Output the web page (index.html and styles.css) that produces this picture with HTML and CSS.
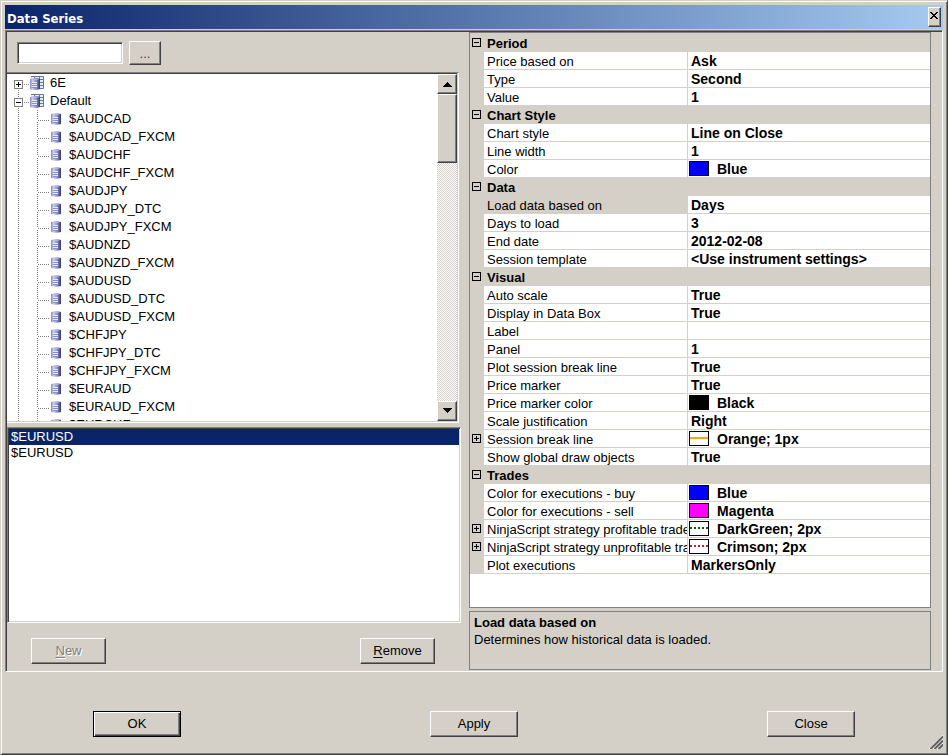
FILE: index.html
```html
<!DOCTYPE html>
<html lang="en">
<head>
  <meta charset="UTF-8">
  <meta name="viewport" content="width=device-width, initial-scale=1.0">
  <title>Data Series</title>
  <link rel="stylesheet" href="styles.css">
</head>
<body>
  <!-- Shared icons -->
  <svg class="defs" width="0" height="0" aria-hidden="true">
    <defs>
      <linearGradient id="metal" x1="0" x2="1" y1="0" y2="0">
        <stop offset="0" stop-color="#8388c4"/>
        <stop offset="0.25" stop-color="#c9cdf0"/>
        <stop offset="0.6" stop-color="#8f93cc"/>
        <stop offset="1" stop-color="#34366e"/>
      </linearGradient>
      <symbol id="db" viewBox="0 0 10 12">
        <path d="M0 1Q5-.5 10 1V11Q5 12.500 0 11Z" fill="url(#metal)"/>
        <path d="M1 1.5Q5 .5 9 1.5Q5 3 1 1.5Z" fill="#b4b9dc"/>
        <path d="M2 4.5H7M2 6.5H7M2 8.5H7" stroke="#e6e9ff" fill="none"/>
        <path d="M2 5.5H7M2 7.5H7M2 9.5H7" stroke="#8a90c8" fill="none"/>
      </symbol>
      <symbol id="dbgroup" viewBox="0 0 14 14">
        <path d="M1 0H14V13H8V3H1Z" fill="#dcf0f5"/>
        <path d="M1 .5H13.5V12.5H9M4.500 0V3M9.500 0V3M9 3.500H13M9 6.500H13M9 9.500H13" stroke="#6f7888" fill="none"/>
        <path d="M0 3Q5 1 10 3V13Q5 15 0 13Z" fill="url(#metal)"/>
        <path d="M1 3.500Q5 2.500 9 3.500Q5 5 1 3.500Z" fill="#b4b9dc"/>
        <path d="M2 6.500H7M2 8.500H7M2 10.500H7" stroke="#e6e9ff" fill="none"/>
        <path d="M2 7.500H7M2 9.500H7M2 11.500H7" stroke="#8a90c8" fill="none"/>
      </symbol>
    </defs>
  </svg>

  <div class="window">
    <header class="titlebar">
      <h1>Data Series</h1>
      <button class="close" type="button" aria-label="Close window">
        <svg width="8" height="7" viewBox="0 0 8 7" shape-rendering="crispEdges"><path d="M0 0h2v1h1v1h2v-1h1v-1h2v1h-1v1h-1v1h-1v1h1v1h1v1h1v1h-2v-1h-1v-1h-2v1h-1v1h-2v-1h1v-1h1v-1h1v-1h-1v-1h-1v-1h-1z"/></svg>
      </button>
    </header>

    <main class="panel">
      <section class="instruments">
        <div class="search">
          <input type="text" aria-label="Instrument">
          <button type="button" class="browse" aria-label="Browse">...</button>
        </div>

        <div class="tree-box">
          <ul class="tree" id="tree">
            <li class="group"><button class="expander" type="button" aria-label="Expand 6E"><svg width="7" height="7"><path d="M1 3.5H6M3.5 1V6"/></svg></button><span class="link"></span><svg class="icon-group"><use href="#dbgroup"/></svg>6E</li>
            <li class="group"><button class="expander" type="button" aria-label="Collapse Default"><svg width="7" height="7"><path d="M1 3.5H6"/></svg></button><span class="link"></span><svg class="icon-group"><use href="#dbgroup"/></svg>Default</li>
            <li>
              <ul class="children" id="symbols"></ul>
            </li>
          </ul>
          <div class="scrollbar">
            <button type="button" class="arrow" aria-label="Scroll up"><svg width="9" height="5" shape-rendering="crispEdges"><path d="M4 0h1v1h1v1h1v1h1v1h1v1h-9v-1h1v-1h1v-1h1v-1h1z"/></svg></button>
            <div class="thumb"></div>
            <button type="button" class="arrow arrow-down" aria-label="Scroll down"><svg width="9" height="5" shape-rendering="crispEdges"><path d="M0 0h9v1h-1v1h-1v1h-1v1h-1v1h-1v-1h-1v-1h-1v-1h-1v-1h-1z"/></svg></button>
          </div>
        </div>

        <ul class="series" role="listbox" aria-label="Data series">
          <li role="option" aria-selected="true" class="selected">$EURUSD</li>
          <li role="option" aria-selected="false">$EURUSD</li>
        </ul>

        <div class="series-actions">
          <button type="button" class="btn" disabled><u>N</u>ew</button>
          <button type="button" class="btn"><u>R</u>emove</button>
        </div>
      </section>

      <section class="properties">
        <div class="grid-box">
          <table class="grid">
            <colgroup>
              <col class="col-gutter">
              <col class="col-name">
              <col>
            </colgroup>
            <tbody id="properties"></tbody>
          </table>
        </div>
        <div class="help">
          <h2>Load data based on</h2>
          <p>Determines how historical data is loaded.</p>
        </div>
      </section>
    </main>

    <footer class="footer">
      <button type="button" class="btn btn-wide default">OK</button>
      <button type="button" class="btn btn-wide">Apply</button>
      <button type="button" class="btn btn-wide">Close</button>
    </footer>
    <svg class="grip" width="14" height="14" aria-hidden="true">
      <path d="M0 14L14 0M4 14L14 4M8 14L14 8" stroke="#fff"/>
      <path d="M1.500 14L14 1.500M5.500 14L14 5.500M9.500 14L14 9.500" stroke="#606060" stroke-width="2"/>
    </svg>
  </div>

  <script>
    const symbols = [
      '$AUDCAD', '$AUDCAD_FXCM', '$AUDCHF', '$AUDCHF_FXCM', '$AUDJPY', '$AUDJPY_DTC',
      '$AUDJPY_FXCM', '$AUDNZD', '$AUDNZD_FXCM', '$AUDUSD', '$AUDUSD_DTC', '$AUDUSD_FXCM',
      '$CHFJPY', '$CHFJPY_DTC', '$CHFJPY_FXCM', '$EURAUD', '$EURAUD_FXCM', '$EURCHF'
    ];

    // name, value, swatch class, expandable
    const sections = {
      'Period': [['Price based on', 'Ask'], ['Type', 'Second'], ['Value', '1']],
      'Chart Style': [['Chart style', 'Line on Close'], ['Line width', '1'], ['Color', 'Blue', 'blue']],
      'Data': [
        ['Load data based on', 'Days'], ['Days to load', '3'], ['End date', '2012-02-08'],
        ['Session template', '&lt;Use instrument settings&gt;']
      ],
      'Visual': [
        ['Auto scale', 'True'], ['Display in Data Box', 'True'], ['Label', ''], ['Panel', '1'],
        ['Plot session break line', 'True'], ['Price marker', 'True'],
        ['Price marker color', 'Black', 'black'], ['Scale justification', 'Right'],
        ['Session break line', 'Orange; 1px', 'line-orange', true],
        ['Show global draw objects', 'True']
      ],
      'Trades': [
        ['Color for executions - buy', 'Blue', 'blue'],
        ['Color for executions - sell', 'Magenta', 'magenta'],
        ['NinjaScript strategy profitable trade', 'DarkGreen; 2px', 'line-green', true],
        ['NinjaScript strategy unprofitable trade', 'Crimson; 2px', 'line-crimson', true],
        ['Plot executions', 'MarkersOnly']
      ]
    };

    function expander(open, label) {
      const path = open ? 'M1 3.5H6' : 'M1 3.5H6M3.5 1V6';
      return `<button class="expander" type="button" aria-label="${open ? 'Collapse' : 'Expand'} ${label}"><svg width="7" height="7"><path d="${path}"/></svg></button>`;
    }

    document.getElementById('symbols').innerHTML = symbols.map(name =>
      `<li><span class="link"></span><svg class="icon-db"><use href="#db"/></svg>${name}</li>`
    ).join('');

    let rows = '';
    for (const title in sections) {
      rows += `<tr class="category"><td class="gutter">${expander(true, title)}</td><th colspan="2">${title}</th></tr>`;
      sections[title].forEach(([name, value, swatch, expandable]) => {
        const active = name === 'Load data based on' ? ' class="active"' : '';
        rows += `<tr${active}>
          <td class="gutter">${expandable ? expander(false, name) : ''}</td>
          <th class="name" scope="row">${name}</th>
          <td class="value">${swatch ? `<span class="swatch ${swatch}"></span>` : ''}${value}</td>
        </tr>`;
      });
    }
    document.getElementById('properties').innerHTML = rows;
  </script>
</body>
</html>
```
FILE: styles.css
```css
* {
  box-sizing: border-box;
}
body {
  margin: 0;
  background-color: #d4d0c8;
  color: #000;
  font-family: "Liberation Sans", Arial, sans-serif;
  font-size: 13px;
  line-height: 18px;
}
ul {
  list-style: none;
  margin: 0;
  padding: 0;
}
button,
input {
  font: inherit;
  color: inherit;
}
button {
  display: flex;
  align-items: center;
  justify-content: center;
  padding: 0;
  background-color: #d4d0c8;
  border: 1px solid;
  border-color: #fff #404040 #404040 #fff;
  box-shadow: inset -1px -1px #808080;
}
.defs {
  position: absolute;
}
.window {
  position: relative;
  display: flex;
  flex-direction: column;
  height: 100vh;
  min-height: 755px;
  padding: 4px;
  border: 1px solid;
  border-color: #d4d0c8 #404040 #404040 #d4d0c8;
  box-shadow: inset 1px 1px #fff, inset -1px -1px #808080;
}

/* Title bar */
.titlebar {
  display: flex;
  align-items: center;
  justify-content: space-between;
  height: 24px;
  margin-bottom: 1px;
  padding: 0 2px;
  background: linear-gradient(90deg, #0a246a, #a6caf0);
}
.titlebar h1 {
  margin: 0;
  padding-top: 3px;
  color: #fff;
  font-family: "DejaVu Sans Condensed", Tahoma, sans-serif;
  font-size: 13px;
  font-weight: bold;
}
.close {
  width: 13px;
  height: 20px;
  padding: 0 1px 3px 0;
}

/* Main panel */
.panel {
  flex: 1;
  min-height: 0;
  display: grid;
  grid-template-columns: minmax(0, 1fr) minmax(0, 1fr);
  grid-template-rows: minmax(0, 1fr);
  padding: 1px 11px 0 1px;
  border: 1px solid;
  border-color: #808080 #fff #fff #808080;
  box-shadow: inset 1px 1px #404040;
}
.instruments,
.properties {
  display: flex;
  flex-direction: column;
}
.search {
  display: flex;
  align-items: center;
  gap: 6px;
  height: 40px;
  padding: 2px 10px 0;
}
.search input {
  width: 106px;
  height: 22px;
  padding: 1px 4px;
  background-color: #fff;
  border: 1px solid;
  border-color: #808080 #fff #fff #808080;
  box-shadow: inset 1px 1px #404040, inset -1px -1px #d4d0c8;
}
.browse {
  width: 32px;
  height: 24px;
  padding-top: 2px;
  color: #404040;
}

/* Instrument tree */
.tree-box {
  flex: 9 1 0;
  min-height: 0;
  display: flex;
  margin-right: 10px;
  padding: 1px 1px 1px 0;
  overflow: hidden;
  background-color: #fff;
  border: solid;
  border-width: 1px 1px 1px 0;
  border-color: #808080 #fff #fff;
  box-shadow: inset -1px -1px #d4d0c8, inset 0 1px #404040;
}
.tree {
  flex: 1;
  overflow: hidden;
  background: repeating-linear-gradient(#808080 0 1px, #fff 1px 2px) 11px 12px / 1px 100% no-repeat;
}
.group,
.children li {
  display: flex;
  align-items: center;
  height: 18px;
  white-space: nowrap;
}
.group {
  padding-left: 7px;
}
.children {
  margin-left: 30px;
  background: repeating-linear-gradient(#808080 0 1px, #fff 1px 2px) 0 0 / 1px 100% no-repeat;
}
.link {
  width: 7px;
  height: 1px;
  margin-top: 3px;
  background: repeating-linear-gradient(90deg, #fff 0 1px, #808080 1px 2px);
}
.children .link {
  width: 12px;
}
.icon-group {
  width: 14px;
  height: 14px;
  margin-right: 6px;
}
.icon-db {
  width: 10px;
  height: 12px;
  margin: 0 8px 0 2px;
}
.expander {
  width: 9px;
  height: 9px;
  flex-shrink: 0;
  background-color: #fff;
  border: 1px solid #808080;
  box-shadow: none;
}
.tree .expander {
  margin-top: 3px;
}
.expander path {
  stroke: #000;
}

.scrollbar {
  display: flex;
  flex-direction: column;
  width: 20px;
  background: repeating-conic-gradient(#d4d0c8 0 25%, #fff 0 50%) 0 0 / 2px 2px;
}
.arrow {
  height: 20px;
  flex-shrink: 0;
}
.arrow-down {
  margin-top: auto;
}
.thumb {
  height: 69px;
  background-color: #d4d0c8;
  border: 1px solid;
  border-color: #fff #404040 #404040 #fff;
  box-shadow: inset -1px -1px #808080;
}

/* Selected series */
.series {
  flex: 5 1 0;
  margin: 4px 8px 0 0;
  padding: 1px;
  background-color: #fff;
  border: 1px solid;
  border-color: #808080 #fff #fff #808080;
  box-shadow: inset 1px 1px #404040, inset -1px -1px #d4d0c8;
  line-height: 16px;
}
.series li {
  padding-left: 2px;
}
.series .selected {
  background-color: #0a246a;
  color: #fff;
}
.series-actions {
  display: flex;
  justify-content: space-between;
  padding: 15px 34px 7px 24px;
}
.btn {
  width: 75px;
  height: 26px;
}
.btn u {
  text-underline-offset: 2px;
}
.btn:disabled {
  color: #808080;
  text-shadow: 1px 1px #fff;
}
.btn-wide {
  width: 88px;
}
.default {
  border-color: #000;
  box-shadow: inset 1px 1px #fff, inset -1px -1px #404040, inset -2px -2px #808080;
}

/* Property grid */
.properties {
  gap: 3px;
  padding-bottom: 1px;
}
.grid-box {
  flex: 1;
  min-height: 0;
  overflow: hidden;
  background-color: #fff;
  border: 1px solid #808080;
}
.grid {
  width: 100%;
  table-layout: fixed;
  border-spacing: 0;
  border-top: 1px solid #d4d0c8;
}
.col-gutter {
  width: 14px;
}
.col-name {
  width: 204px;
}
.grid th,
.grid td {
  height: 18px;
  padding: 2px 0 0 3px;
  overflow: hidden;
  border-bottom: 1px solid #d4d0c8;
  line-height: 15px;
  text-align: left;
  white-space: nowrap;
}
.grid .gutter {
  padding: 0 0 0 2px;
  background-color: #d4d0c8;
}
.gutter .expander {
  background-color: #d4d0c8;
  border-color: #000;
}
.category th,
.active .name {
  background-color: #d4d0c8;
}
.grid .name {
  border-right: 1px solid #d4d0c8;
  font-weight: normal;
}
.grid .value {
  font-size: 14px;
  font-weight: bold;
}
.swatch {
  display: inline-block;
  width: 20px;
  height: 15px;
  margin: -1px 8px 0 -2px;
  border: 1px solid #000;
  vertical-align: top;
}
.blue {
  background-color: #00f;
}
.black {
  background-color: #000;
}
.magenta {
  background-color: #f0f;
}
.line-orange {
  background: linear-gradient(#ffa500, #ffa500) 0 5px / 100% 2px no-repeat;
}
.line-green {
  background: repeating-linear-gradient(90deg, #006400 0 2px, #fff 2px 4px) 0 5px / 100% 2px no-repeat;
}
.line-crimson {
  background: repeating-linear-gradient(90deg, #dc143c 0 2px, #fff 2px 4px) 0 5px / 100% 2px no-repeat;
}
.line-orange,
.line-green,
.line-crimson {
  background-color: #fff;
}
.help {
  height: 59px;
  padding: 2px 4px;
  border: 1px solid #808080;
}
.help h2,
.help p {
  margin: 0;
  font-size: 13px;
  line-height: 17px;
}

/* Bottom buttons */
.footer {
  display: flex;
  justify-content: space-between;
  padding: 39px 88px 13px;
}
.grip {
  position: absolute;
  right: 4px;
  bottom: 5px;
}
```
